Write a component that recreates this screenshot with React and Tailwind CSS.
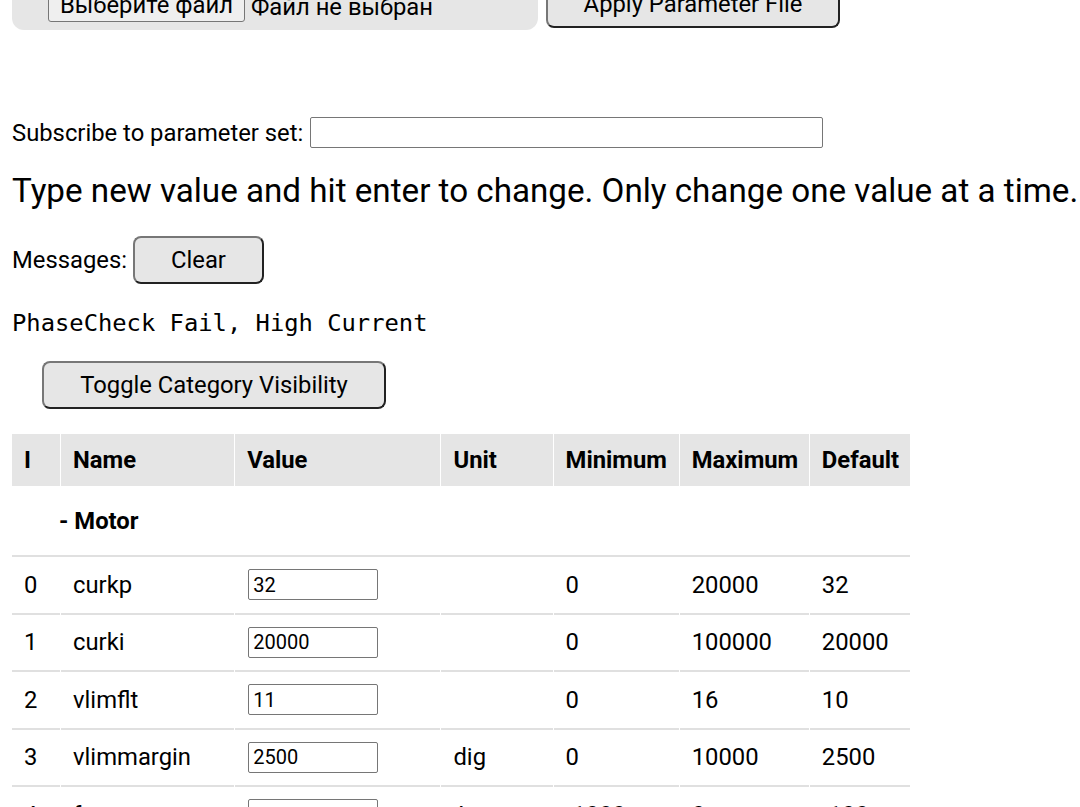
export default function App() {
  const rows = [
    { i: 0, name: "curkp", value: "32", unit: "", min: "0", max: "20000", def: "32" },
    { i: 1, name: "curki", value: "20000", unit: "", min: "0", max: "100000", def: "20000" },
    { i: 2, name: "vlimflt", value: "11", unit: "", min: "0", max: "16", def: "10" },
    { i: 3, name: "vlimmargin", value: "2500", unit: "dig", min: "0", max: "10000", def: "2500" },
    { i: 4, name: "fwcurmax", value: "-33", unit: "A", min: "-1000", max: "0", def: "-100" },
  ];
  const btn =
    "bg-[#e6e6e6] border-2 border-[#777777] border-r-[#222222] border-b-[#222222] rounded-[8px] text-black text-[23.8px] leading-[28px]";
  return (
    <div className="h-[807px] overflow-hidden bg-white text-black font-['Roboto',sans-serif] text-[23.8px] leading-[28px] px-3">
      <div className="flex items-end gap-2 -mt-[30px]">
        <div className="w-[526px] h-[60px] bg-[#e6e6e6] rounded-[12px] flex items-end pb-[8px] pl-[36px]">
          <div className="flex items-center">
            <span className="h-[31px] px-[11px] border border-[#767676] rounded-[3px] bg-[#efefef] leading-[26px]">
              Выберите файл
            </span>
            <span className="ml-[6px] leading-[26px]">Файл не выбран</span>
          </div>
        </div>
        <button className={btn + " w-[294px] h-[48px] mb-[2px]"}>Apply Parameter File</button>
      </div>

      <div className="flex items-center mt-[87px]">
        <span>Subscribe to parameter set:</span>
        <input
          className="ml-[7px] w-[513px] h-[31px] border border-[#767676] rounded-[2px] px-1 text-[20px]"
          defaultValue=""
        />
      </div>

      <h2 className="text-[33.2px] leading-[38px] mt-[24px] font-normal whitespace-nowrap">
        Type new value and hit enter to change. Only change one value at a time.
      </h2>

      <div className="flex items-center mt-[26px]">
        <span>Messages:</span>
        <button className={btn + " ml-[6px] w-[131px] h-[48px]"}>Clear</button>
      </div>

      <div className="mt-[25px] font-['DejaVu_Sans_Mono',monospace] text-[23.8px] leading-[28px]">
        PhaseCheck Fail, High Current
      </div>

      <button className={btn + " ml-[30px] mt-[24px] w-[344px] h-[48px]"}>Toggle Category Visibility</button>

      <table className="mt-[25px] table-fixed border-separate border-spacing-x-px border-spacing-y-0 -ml-px w-[900px]">
        <colgroup>
          <col className="w-[48px]" />
          <col className="w-[173px]" />
          <col className="w-[205px]" />
          <col className="w-[111px]" />
          <col className="w-[125px]" />
          <col className="w-[129px]" />
          <col className="w-[100px]" />
        </colgroup>
        <thead>
          <tr className="h-[52px]">
            {["I", "Name", "Value", "Unit", "Minimum", "Maximum", "Default"].map((h) => (
              <th key={h} className="bg-[#e5e5e5] text-left font-bold px-3 whitespace-nowrap">
                {h}
              </th>
            ))}
          </tr>
        </thead>
        <tbody>
          <tr className="h-[71px]">
            <td colSpan={7} className="border-b-2 border-[#e0e0e0] font-bold pl-[47px]">
              - Motor
            </td>
          </tr>
          {rows.map((r) => (
            <tr key={r.i} className="h-[57.5px]">
              <td className="border-b-2 border-[#e0e0e0] px-3">{r.i}</td>
              <td className="border-b-2 border-[#e0e0e0] px-3">{r.name}</td>
              <td className="border-b-2 border-[#e0e0e0] pl-[13px] pr-3">
                <input
                  className="w-[130px] h-[31px] border border-[#767676] rounded-[2px] px-[4px] text-[20px] leading-[22px] align-middle"
                  defaultValue={r.value}
                />
              </td>
              <td className="border-b-2 border-[#e0e0e0] px-3">{r.unit}</td>
              <td className="border-b-2 border-[#e0e0e0] px-3">{r.min}</td>
              <td className="border-b-2 border-[#e0e0e0] px-3">{r.max}</td>
              <td className="border-b-2 border-[#e0e0e0] px-3">{r.def}</td>
            </tr>
          ))}
        </tbody>
      </table>
    </div>
  );
}
